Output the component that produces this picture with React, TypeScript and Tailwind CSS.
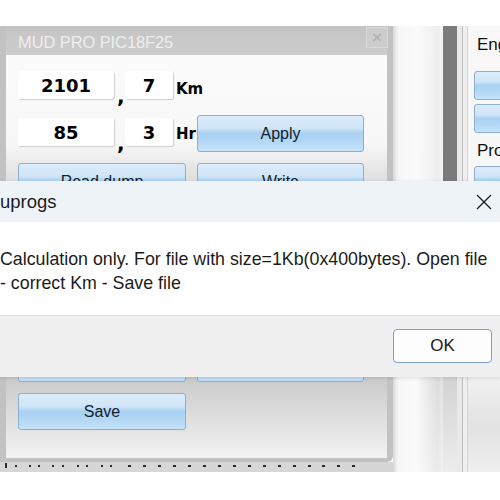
import React from 'react';

const blueBtn =
  'rounded-[3px] border border-[#8eaecd] bg-[linear-gradient(to_bottom,#dcecfa_0%,#cfe5f8_35%,#a9d1f2_50%,#b4d8f5_75%,#c6e3fa_100%)] text-[#14202c]';

function NumBox({ value, wide }: { value: string; wide?: boolean }) {
  return (
    <div
      className={`${wide ? 'w-[96px]' : 'w-[48px]'} flex h-[28px] shrink-0 items-center justify-center rounded-[2px] bg-white text-[18px] font-bold text-black shadow-[1px_1px_1px_#cfcfcf]`}
      style={{ fontFamily: '"DejaVu Sans", sans-serif' }}
    >
      {value}
    </div>
  );
}

function Comma() {
  return (
    <div
      className="h-[28px] w-[11px] shrink-0 overflow-visible pl-[3px] pt-[15px] text-[20px] font-bold leading-none text-black"
      style={{ fontFamily: '"DejaVu Sans", sans-serif' }}
    >
      ,
    </div>
  );
}

function Dots() {
  const xs = [5, 15, 29, 38, 52, 62, 77, 86, 101, 110, 128, 143, 158, 173, 188, 203, 218, 233, 248, 263, 278, 293, 308, 322, 337, 352];
  return (
    <svg width="393" height="10" className="block">
      {xs.map((x, i) => (
        <rect key={x} x={x} y={i === 0 ? 1 : 3} width={i < 10 ? 2 : 3} height={i === 0 ? 5 : 2} fill="#2a2a2a" />
      ))}
    </svg>
  );
}

export default function App() {
  return (
    <div
      className="relative h-[500px] w-[500px] overflow-hidden bg-white"
      style={{ fontFamily: '"Liberation Sans", Arial, sans-serif' }}
    >
      <div className="h-[26px]" />
      <div className="flex h-[446px]">
        {/* left window */}
        <div className="flex w-[393px] shrink-0 flex-col">
          <div className="flex h-[436px] flex-col rounded-br-[6px] bg-[#c2c2c2] pb-[4px] pl-[6px] pr-[6px]">
            <div className="flex h-[29px] items-start justify-between bg-[linear-gradient(to_bottom,#c4c4c4,#cdcdcd)] pl-[12px]">
              <span className="pt-[4px] text-[16.5px] tracking-[-0.1px] text-[#eeeeee]">MUD PRO PIC18F25</span>
              <div className="mr-[-1px] mt-[1px] flex h-[21px] w-[22px] items-center justify-center border border-[#d8d8d8] bg-[#cdcdcd] text-[17px] font-bold leading-none text-[#b4b4b4]">
                ×
              </div>
            </div>
            <div className="flex flex-1 flex-col bg-[linear-gradient(to_bottom,#fbfbfb_0%,#f7f7f7_22%,#dfdfdf_31%,#cacaca_80%,#f2f2f2_100%)] pl-[12px] pt-[16px]">
              <div className="flex h-[28px] items-start">
                <NumBox value="2101" wide />
                <Comma />
                <NumBox value="7" />
                <span
                  className="ml-[3px] pt-[11px] text-[15px] font-bold leading-none text-black"
                  style={{ fontFamily: '"DejaVu Sans", sans-serif' }}
                >
                  Km
                </span>
              </div>
              <div className="mt-[16px] flex h-[37px] items-start">
                <div className="mt-[3px]">
                  <NumBox value="85" wide />
                </div>
                <div className="mt-[3px]">
                  <Comma />
                </div>
                <div className="mt-[3px]">
                  <NumBox value="3" />
                </div>
                <span
                  className="w-[24px] shrink-0 pl-[3px] pt-[12px] text-[15px] font-bold leading-none text-black"
                  style={{ fontFamily: '"DejaVu Sans", sans-serif' }}
                >
                  Hr
                </span>
                <button className={`${blueBtn} h-[37px] w-[167px] shrink-0 text-[16px]`}>Apply</button>
              </div>
              <div className="mt-[11px] flex gap-[11px]">
                <button className={`${blueBtn} h-[37px] w-[168px] text-[16px]`}>Read dump</button>
                <button className={`${blueBtn} h-[37px] w-[167px] text-[16px]`}>Write</button>
              </div>
              <div className="mt-[145px] flex gap-[11px]">
                <div className={`${blueBtn} h-[37px] w-[168px]`} />
                <div className={`${blueBtn} h-[37px] w-[167px]`} />
              </div>
              <div className="mt-[11px] flex">
                <button className={`${blueBtn} h-[37px] w-[168px] text-[16px]`}>Save</button>
              </div>
            </div>
          </div>
          <div className="h-[10px] bg-[#d6d6d6]">
            <Dots />
          </div>
        </div>

        {/* gap between windows */}
        <div className="w-[50px] shrink-0 bg-[linear-gradient(to_bottom,#f7f7f7_0%,#f4f4f4_40%,#cdcdcd_78%,#efefef_100%)]">
          <div className="h-full w-full bg-[linear-gradient(to_right,#d8d8d8_0%,#f6f6f6_10%,#fbfbfb_45%,rgba(230,230,230,0.5)_90%,rgba(245,245,245,0.6)_100%)]" />
        </div>
        <div className="flex w-[14px] shrink-0 flex-col">
          <div className="h-[351px] bg-[#7b7b7b]" />
          <div className="flex-1 bg-[linear-gradient(to_bottom,#d2d2d2,#ededed)]" />
        </div>
        <div className="w-[5px] shrink-0 bg-[#e9e9e9]" />
        <div className="w-[1px] shrink-0 bg-[#bdbdbd]" />
        <div className="w-[4px] shrink-0 bg-[#efefef]" />

        {/* right panel */}
        <div className="min-w-0 flex-1 overflow-hidden border-l border-[#d4d4d4] bg-[linear-gradient(to_bottom,#f8f8f8_0%,#f6f6f6_75%,#e2e2e2_90%,#efefef_100%)] pl-[6px]">
          <div className="whitespace-nowrap pl-[3px] pt-[9px] text-[17px] leading-[20px] text-[#111]">Eng</div>
          <div className={`${blueBtn} mt-[16px] h-[29px] w-[40px]`} />
          <div className={`${blueBtn} mt-[4px] h-[29px] w-[40px]`} />
          <div className="whitespace-nowrap pl-[3px] pt-[8px] text-[17px] leading-[20px] text-[#111]">Pro</div>
          <div className={`${blueBtn} mt-[5px] h-[29px] w-[40px]`} />
        </div>
      </div>

      {/* message box */}
      <div className="absolute left-0 top-[181px] flex h-[196px] w-[500px] flex-col shadow-[0_1px_4px_rgba(0,0,0,0.12)]">
        <div className="flex h-[41px] items-center justify-between bg-[#eef3f8] pr-[8px]">
          <span className="text-[18.5px] text-[#1b1b1b]">uprogs</span>
          <svg width="16" height="16" viewBox="0 0 16 16">
            <path d="M1 1 L15 15 M15 1 L1 15" stroke="#1b1b1b" strokeWidth="1.3" />
          </svg>
        </div>
        <div className="h-[93px] whitespace-nowrap bg-white pt-[25px] text-[17.8px] leading-[24px] text-[#1b1b1b]">
          <div>Calculation only. For file with size=1Kb(0x400bytes). Open file</div>
          <div>- correct Km - Save file</div>
        </div>
        <div className="flex h-[62px] items-start justify-end border-t border-[#e2e2e2] bg-[#f0f0f0] pr-[8px] pt-[13px]">
          <button className="h-[34px] w-[99px] rounded-[4px] border border-[#7c9fca] bg-[#fdfdfd] text-[17px] text-[#1b1b1b]">
            OK
          </button>
        </div>
      </div>
    </div>
  );
}
